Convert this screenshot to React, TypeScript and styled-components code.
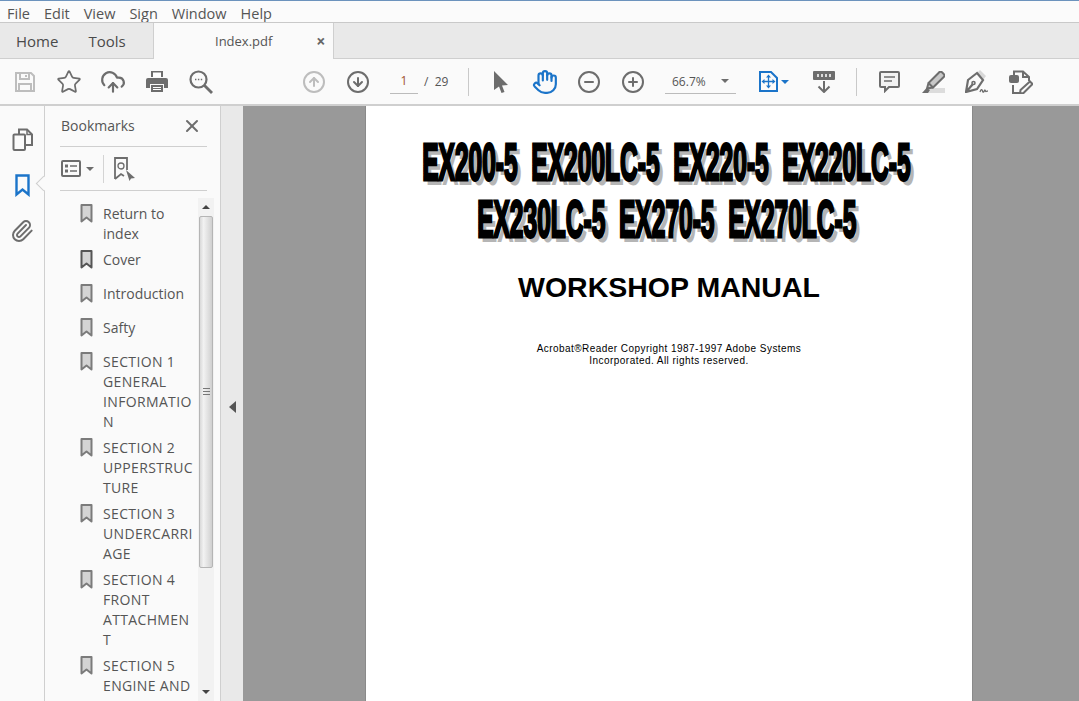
import React from 'react';
import styled, { createGlobalStyle } from 'styled-components';
import {
  CircleArrowDown,
  CircleArrowUp,
  CircleMinus,
  CirclePlus,
  CloudUpload,
  Hand,
  Paperclip,
  Star,
  X
} from 'lucide-react';

const GlobalStyle = createGlobalStyle`
  html, body {
    margin: 0;
    height: 100%;
    overflow: hidden;
    background: #fff;
  }
  body {
    font-family: "Open Sans", "Noto Sans", sans-serif;
    font-size: 14px;
    color: #4b4b4b;
  }
  #root { height: 100%; }
`;

const GRAY = '#6d6d6d';
const BLUE = '#1b74c9';

const BOOKMARKS: { lines: string[]; dark?: boolean }[] = [
  { lines: ['Return to', 'index'] },
  { lines: ['Cover'], dark: true },
  { lines: ['Introduction'] },
  { lines: ['Safty'] },
  { lines: ['SECTION 1', 'GENERAL', 'INFORMATIO', 'N'] },
  { lines: ['SECTION 2', 'UPPERSTRUC', 'TURE'] },
  { lines: ['SECTION 3', 'UNDERCARRI', 'AGE'] },
  { lines: ['SECTION 4', 'FRONT', 'ATTACHMEN', 'T'] },
  { lines: ['SECTION 5', 'ENGINE AND', 'ACCESSORIES'] }
];

const SaveIcon = () => (
  <svg width="22" height="22" viewBox="0 0 22 22" fill="none" stroke="#bdbdbd" strokeWidth="2">
    <path d="M2 2h15l3 3v15H2z" />
    <path d="M6 2v6h9V2M12 4v2M5 20v-7h12v7" />
  </svg>
);

const PrintIcon = () => (
  <svg width="22" height="21" viewBox="0 0 22 21">
    <path fill={GRAY} d="M5 0h12v6H5zM2 7h18a2 2 0 0 1 2 2v8h-4v-4H4v4H0V9a2 2 0 0 1 2-2z" />
    <path fill={GRAY} d="M5 14h12v7H5z" />
    <path fill="#fff" d="M7 1.500h8V6H7zM7 16h8v1H7zM7 18h8v1H7z" />
  </svg>
);

const FindIcon = () => (
  <svg width="24" height="24" viewBox="0 0 24 24" fill="none" stroke={GRAY} strokeWidth="2.2">
    <circle cx="9.500" cy="9.500" r="8" />
    <path d="M15.500 15.500 23 23" strokeWidth="2.800" />
    <path d="M6 9.500h1.400M8.900 9.500h1.400M11.800 9.500h1.400" strokeWidth="1.600" />
  </svg>
);

const PointerIcon = () => (
  <svg width="16" height="22" viewBox="0 0 16 22">
    <path fill={GRAY} d="M1 0 15 14l-6 .5 2.500 6.500-3 1L6 15.500 1 19z" />
  </svg>
);

const FitIcon = () => (
  <svg width="19" height="21" viewBox="0 0 19 21" fill="none" stroke={BLUE}>
    <path strokeWidth="2" d="M1 1h11l6 6v13H1z" />
    <path strokeWidth="1.300" d="M9.500 5v11M4 10.500h11" />
    <path fill={BLUE} stroke="none" d="M9.500 3.500l2.500 3H7zM9.500 17.500l-2.500-3h5zM2.500 10.500l3-2.500v5zM16.500 10.500l-3 2.500V8z" />
  </svg>
);

const ReadIcon = () => (
  <svg width="22" height="22" viewBox="0 0 22 22" fill="none" stroke={GRAY}>
    <rect x="0" y="0" width="22" height="9" rx="1" fill={GRAY} stroke="none" />
    <path stroke="#dcdcdc" strokeWidth="3" strokeDasharray="2 2" d="M4 4.500h14" />
    <path strokeWidth="2" d="M11 10v11M5.500 15.500l5.500 5.500 5.500-5.500" />
  </svg>
);

const CommentIcon = () => (
  <svg width="21" height="22" viewBox="0 0 21 22" fill="#f2f2f2" stroke={GRAY} strokeWidth="2">
    <path d="M2 1h17a1 1 0 0 1 1 1v13a1 1 0 0 1-1 1H10l-4 4v-4H2a1 1 0 0 1-1-1V2a1 1 0 0 1 1-1z" />
    <path strokeWidth="1.400" d="M5 6h11M5 10h8" />
  </svg>
);

const HighlightIcon = () => (
  <svg width="24" height="22" viewBox="0 0 24 22">
    <path fill="#dcdcdc" d="M7 17h17v5H7z" />
    <path fill="#c8c8c8" stroke={GRAY} strokeWidth="2" d="M18 1.500a2 2 0 0 1 3-.2l1.700 1.700a2 2 0 0 1 0 3L12 16.500 7.500 12zM7.500 12 6 17.500l6-1" />
    <path fill={GRAY} d="M5.500 17 1 22h6l2-3z" />
  </svg>
);

const SignIcon = () => (
  <svg width="24" height="23" viewBox="0 0 24 23" fill="none" stroke={GRAY} strokeWidth="2.200">
    <path fill="#d8d8d8" stroke="none" d="M12 3l3-3 6 6-3 4z" />
    <path d="M12 3 3 10 1 22l11-3 6-9zM1.500 21.500l6-7" />
    <circle cx="8.500" cy="13" r="1.500" strokeWidth="1.600" />
    <path strokeWidth="1.300" d="M15 22c1-3 2-3 2.500-1s1.500 1 2-.5.800 1 1.500 1 1.200-.5 2-.5" />
  </svg>
);

const EditIcon = () => (
  <svg width="24" height="24" viewBox="0 0 24 24" fill="none" stroke={GRAY} strokeWidth="2">
    <path d="M5 7V1.500h9L20 7v4M14 1.500V7h6M4 15v8h8" />
    <rect x="0" y="5" width="10" height="8" rx="2" fill={GRAY} stroke="none" />
    <path d="M21 11.500l2.500 2.500-9 9-3.500.5.500-3.500z" />
  </svg>
);

const PagesIcon = () => (
  <svg width="21" height="23" viewBox="0 0 21 23" fill="none" stroke={GRAY} strokeWidth="2">
    <path d="M7 6V1.500h8l5 5V17h-6" />
    <path strokeWidth="1.500" d="M15 1.500v5h5" />
    <path d="M2.500 6.500H12a1 1 0 0 1 1 1V21a1 1 0 0 1-1 1H2.500a1 1 0 0 1-1-1V7.500a1 1 0 0 1 1-1z" />
  </svg>
);

const BookmarkGlyph = ({ $dark }: { $dark?: boolean }) => (
  <svg width="13" height="19" viewBox="0 0 13 19">
    <path
      fill="#d4d4d4"
      stroke={$dark ? '#555' : '#7b7b7b'}
      strokeWidth="2"
      strokeLinejoin="round"
      d="M1.500 1h10v16.500l-5-4-5 4z"
    />
  </svg>
);

const App = () => (
  <Page>
    <GlobalStyle />
    <TopLine />
    <MenuBar>
      {['File', 'Edit', 'View', 'Sign', 'Window', 'Help'].map((m) => (
        <span key={m}>{m}</span>
      ))}
    </MenuBar>
    <TabBar>
      <HomeTabs>
        <TabLabel>Home</TabLabel>
        <TabLabel>Tools</TabLabel>
      </HomeTabs>
      <FileTab>
        <span>Index.pdf</span>
        <TabClose>×</TabClose>
      </FileTab>
      <TabFill />
    </TabBar>
    <Toolbar>
      <Tool><SaveIcon /></Tool>
      <Tool><Star size={26} color={GRAY} strokeWidth={1.6} /></Tool>
      <Tool><CloudUpload size={26} color={GRAY} strokeWidth={2} /></Tool>
      <Tool><PrintIcon /></Tool>
      <Tool><FindIcon /></Tool>
      <Tool $left={69}><CircleArrowUp size={24} color="#bdbdbd" strokeWidth={2} /></Tool>
      <Tool><CircleArrowDown size={24} color={GRAY} strokeWidth={2} /></Tool>
      <PageBox>1</PageBox>
      <PageTotal>/&nbsp;&nbsp;29</PageTotal>
      <Divider $left={6} />
      <Tool $left={10}><PointerIcon /></Tool>
      <Tool><Hand size={26} color={BLUE} strokeWidth={2} /></Tool>
      <Tool><CircleMinus size={24} color={GRAY} strokeWidth={2} /></Tool>
      <Tool><CirclePlus size={24} color={GRAY} strokeWidth={2} /></Tool>
      <ZoomBox>
        66.7%
        <Caret $color={GRAY} />
      </ZoomBox>
      <Tool $left={10}><FitIcon /></Tool>
      <FitCaret><Caret $color={BLUE} /></FitCaret>
      <Tool $left={13}><ReadIcon /></Tool>
      <Divider $left={10} />
      <Tool $left={10}><CommentIcon /></Tool>
      <Tool><HighlightIcon /></Tool>
      <Tool><SignIcon /></Tool>
      <Tool><EditIcon /></Tool>
    </Toolbar>
    <Body>
      <Rail>
        <RailIcon><PagesIcon /></RailIcon>
        <RailIcon $active>
          <svg width="15" height="23" viewBox="0 0 15 23" fill="none" stroke={BLUE} strokeWidth="2.400">
            <path d="M1.500 1.500h12v19l-6-5-6 5z" />
          </svg>
        </RailIcon>
        <RailIcon><Paperclip size={24} color={GRAY} strokeWidth={2} /></RailIcon>
      </Rail>
      <Panel>
        <PanelHead>
          <PanelTitle>Bookmarks</PanelTitle>
          <X size={20} color={GRAY} strokeWidth={2.4} />
        </PanelHead>
        <PanelTools>
          <svg width="20" height="17" viewBox="0 0 20 17" fill="none" stroke={GRAY} strokeWidth="2">
            <rect x="1" y="1" width="18" height="15" rx="1" />
            <path fill={GRAY} stroke="none" d="M4 4.500h3v3H4zM4 9.500h3v3H4z" />
            <path strokeWidth="1.600" d="M9 6h7M9 11h7" />
          </svg>
          <Caret $color={GRAY} />
          <PanelToolsRule />
          <svg width="22" height="24" viewBox="0 0 22 24" fill="none" stroke={GRAY} strokeWidth="1.800">
            <path d="M1 22V1h12v12M1 22l6-5 3 2" />
            <circle cx="7" cy="9" r="3" strokeWidth="1.300" />
            <path fill={GRAY} stroke="none" d="M12 13l9 8-4 .5-1.500 2.500z" />
          </svg>
        </PanelTools>
        <TreeArea>
          <Tree>
            {BOOKMARKS.map((b) => (
              <Row key={b.lines[0]}>
                <RowIcon><BookmarkGlyph $dark={b.dark} /></RowIcon>
                <RowText>
                  {b.lines.map((l) => (
                    <RowLine key={l} $caps={l === l.toUpperCase()}>{l}</RowLine>
                  ))}
                </RowText>
              </Row>
            ))}
          </Tree>
          <ScrollBar>
            <ScrollBtn><ArrowTip $up /></ScrollBtn>
            <Thumb><Grip /></Thumb>
            <ScrollRest />
            <ScrollBtn><ArrowTip /></ScrollBtn>
          </ScrollBar>
        </TreeArea>
      </Panel>
      <Gutter><CollapseArrow /></Gutter>
      <DocArea>
        <Sheet>
          <BigTitle>
            <BigLine>EX200-5&nbsp;&nbsp;EX200LC-5&nbsp;&nbsp;EX220-5&nbsp;&nbsp;EX220LC-5</BigLine>
            <BigLine>EX230LC-5&nbsp;&nbsp;EX270-5&nbsp;&nbsp;EX270LC-5</BigLine>
          </BigTitle>
          <Subtitle>WORKSHOP MANUAL</Subtitle>
          <Notice>
            Acrobat®Reader Copyright 1987-1997 Adobe Systems
            <br />
            Incorporated. All rights reserved.
          </Notice>
        </Sheet>
      </DocArea>
    </Body>
  </Page>
);

export default App;

const Page = styled.div`
  height: 701px;
  display: flex;
  flex-direction: column;
  overflow: hidden;
`;

const TopLine = styled.div`
  height: 1px;
  background: #6c93bd;
`;

const MenuBar = styled.div`
  height: 21px;
  box-sizing: border-box;
  padding: 3px 0 0 7px;
  display: flex;
  align-items: center;
  gap: 14px;
  background: #fbfbfb;
  color: #555;
  font-size: 14.5px;
`;

const TabBar = styled.div`
  height: 36px;
  display: flex;
  background: #e9e9e9;
  border-top: 1px solid #c9c9c9;
`;

const HomeTabs = styled.div`
  width: 153px;
  padding-left: 16px;
  box-sizing: border-box;
  display: flex;
  align-items: center;
  gap: 30px;
  border-bottom: 1px solid #cfcfcf;
`;

const TabLabel = styled.span`
  font-size: 15px;
  color: #4a4a4a;
`;

const FileTab = styled.div`
  width: 181px;
  box-sizing: border-box;
  display: flex;
  align-items: center;
  padding-left: 61px;
  background: #fafafa;
  border-left: 1px solid #cfcfcf;
  border-right: 1px solid #cfcfcf;
  font-size: 13px;
  color: #555;
`;

const TabClose = styled.span`
  margin-left: 44px;
  font-size: 16px;
  font-weight: 700;
  color: #666;
`;

const TabFill = styled.div`
  flex: 1;
  border-bottom: 1px solid #cfcfcf;
`;

const Toolbar = styled.div`
  height: 45px;
  padding-left: 3px;
  display: flex;
  align-items: center;
  background: #fafafa;
  border-bottom: 2px solid #cfcfcf;
`;

const Tool = styled.div<{ $left?: number }>`
  width: 44px;
  height: 44px;
  flex: none;
  display: flex;
  align-items: center;
  justify-content: center;
  margin-left: ${({ $left }) => $left ?? 0}px;
`;

const PageBox = styled.div`
  width: 28px;
  margin-left: 10px;
  height: 24px;
  line-height: 24px;
  text-align: center;
  border-bottom: 1px solid #bbb;
  font-size: 12px;
  color: #a0522d;
`;

const PageTotal = styled.div`
  margin-left: 6px;
  width: 38px;
  font-size: 12px;
  color: #555;
`;

const Divider = styled.div<{ $left: number }>`
  width: 1px;
  height: 28px;
  flex: none;
  margin-left: ${({ $left }) => $left}px;
  background: #c9c9c9;
`;

const ZoomBox = styled.div`
  width: 71px;
  height: 24px;
  margin-left: 10px;
  box-sizing: border-box;
  flex: none;
  display: flex;
  align-items: center;
  justify-content: space-between;
  padding: 0 7px;
  border-bottom: 1px solid #bbb;
  font-size: 12px;
  color: #555;
`;

const Caret = styled.span<{ $color: string }>`
  width: 0;
  height: 0;
  border-left: 4px solid transparent;
  border-right: 4px solid transparent;
  border-top: 4px solid ${({ $color }) => $color};
`;

const FitCaret = styled.div`
  width: 8px;
  margin-left: -9px;
  display: flex;
`;

const Body = styled.div`
  flex: 1;
  min-height: 0;
  display: flex;
`;

const Rail = styled.div`
  width: 45px;
  flex: none;
  box-sizing: border-box;
  padding-top: 18px;
  display: flex;
  flex-direction: column;
  align-items: center;
  gap: 16px;
  background: #fafafa;
  border-right: 1px solid #cfcfcf;
`;

const RailIcon = styled.div<{ $active?: boolean }>`
  width: 30px;
  height: 30px;
  display: flex;
  align-items: center;
  justify-content: center;
  position: relative;

  ${({ $active }) =>
    $active &&
    `&::after {
      content: '';
      position: absolute;
      right: -12px;
      top: 8px;
      width: 10px;
      height: 10px;
      background: #fafafa;
      border-left: 1px solid #cfcfcf;
      border-bottom: 1px solid #cfcfcf;
      transform: rotate(45deg);
    }`}
`;

const Panel = styled.div`
  width: 175px;
  flex: none;
  background: #fafafa;
  border-right: 1px solid #cfcfcf;
  display: flex;
  flex-direction: column;
  overflow: hidden;
`;

const PanelHead = styled.div`
  margin: 0 13px 0 15px;
  height: 40px;
  flex: none;
  box-sizing: content-box;
  display: flex;
  align-items: center;
  justify-content: space-between;
  padding-right: 5px;
  border-bottom: 1px solid #cfcfcf;
`;

const PanelTitle = styled.span`
  font-size: 14px;
  color: #555;
  margin: 0 0 2px 1px;
`;

const PanelTools = styled.div`
  margin: 0 13px 0 15px;
  height: 43px;
  flex: none;
  display: flex;
  align-items: center;
  padding-left: 1px;
  gap: 5px;
  border-bottom: 1px solid #cfcfcf;
`;

const PanelToolsRule = styled.div`
  width: 1px;
  height: 28px;
  margin: 0 5px 0 4px;
  background: #d4d4d4;
`;

const TreeArea = styled.div`
  flex: 1;
  min-height: 0;
  display: flex;
  padding-top: 7px;
`;

const Tree = styled.div`
  width: 153px;
  flex: none;
  padding: 6px 0 0 35px;
  box-sizing: border-box;
  overflow: hidden;
`;

const Row = styled.div`
  display: flex;
  min-height: 28px;
  margin-bottom: 6px;
`;

const RowIcon = styled.div`
  width: 23px;
  flex: none;
`;

const RowText = styled.div`
  font-size: 14px;
  line-height: 20px;
  color: #555;
  white-space: nowrap;
`;

const RowLine = styled.div<{ $caps: boolean }>`
  letter-spacing: ${({ $caps }) => ($caps ? '0.35px' : '0')};
`;

const ScrollBar = styled.div`
  width: 16px;
  flex: none;
  display: flex;
  flex-direction: column;
  background: #f2f2f2;
`;

const ScrollBtn = styled.div`
  height: 18px;
  flex: none;
  display: flex;
  align-items: center;
  justify-content: center;
`;

const ArrowTip = styled.span<{ $up?: boolean }>`
  width: 0;
  height: 0;
  border-left: 4px solid transparent;
  border-right: 4px solid transparent;
  ${({ $up }) => ($up ? 'border-bottom' : 'border-top')}: 4px solid #444;
`;

const Thumb = styled.div`
  height: 352px;
  margin: 0 1px;
  flex: none;
  box-sizing: border-box;
  display: flex;
  align-items: center;
  justify-content: center;
  background: linear-gradient(90deg, #d9d9d9, #f2f2f2 30%, #d0d0d0);
  border: 1px solid #b5b5b5;
  border-radius: 2px;
`;

const Grip = styled.div`
  width: 7px;
  height: 8px;
  background: repeating-linear-gradient(180deg, #777 0 1px, transparent 1px 3px);
`;

const ScrollRest = styled.div`
  flex: 1;
`;

const Gutter = styled.div`
  width: 22px;
  flex: none;
  display: flex;
  align-items: center;
  justify-content: center;
  padding-top: 7px;
  box-sizing: border-box;
  background: #e9e9e9;
`;

const CollapseArrow = styled.span`
  width: 0;
  height: 0;
  border-top: 6px solid transparent;
  border-bottom: 6px solid transparent;
  border-right: 7px solid #555;
`;

const DocArea = styled.div`
  flex: 1;
  min-width: 0;
  display: flex;
  justify-content: center;
  padding-left: 16px;
  background: #999;
`;

const Sheet = styled.div`
  width: 608px;
  box-sizing: border-box;
  padding-top: 28px;
  background: #fff;
  border-left: 1px solid #8a8a8a;
  border-right: 1px solid #8a8a8a;
  display: flex;
  flex-direction: column;
  align-items: center;
  color: #000;
  font-family: "Liberation Sans", Arial, sans-serif;
`;

const BigTitle = styled.div`
  display: flex;
  flex-direction: column;
  align-items: center;
  padding-right: 5px;
`;

const BigLine = styled.div`
  height: 57px;
  line-height: 57px;
  white-space: nowrap;
  font-size: 52px;
  font-weight: 700;
  -webkit-text-stroke: 3px #000;
  text-shadow: 8px 5px 0 #b5b5b5;
  transform: scaleX(0.472);
`;

const Subtitle = styled.div`
  margin-top: 22px;
  font-size: 28.500px;
  line-height: 34px;
  font-weight: 700;
  white-space: nowrap;
`;

const Notice = styled.div`
  margin-top: 39px;
  font-size: 10px;
  line-height: 12px;
  text-align: center;
  letter-spacing: 0.45px;
`;
